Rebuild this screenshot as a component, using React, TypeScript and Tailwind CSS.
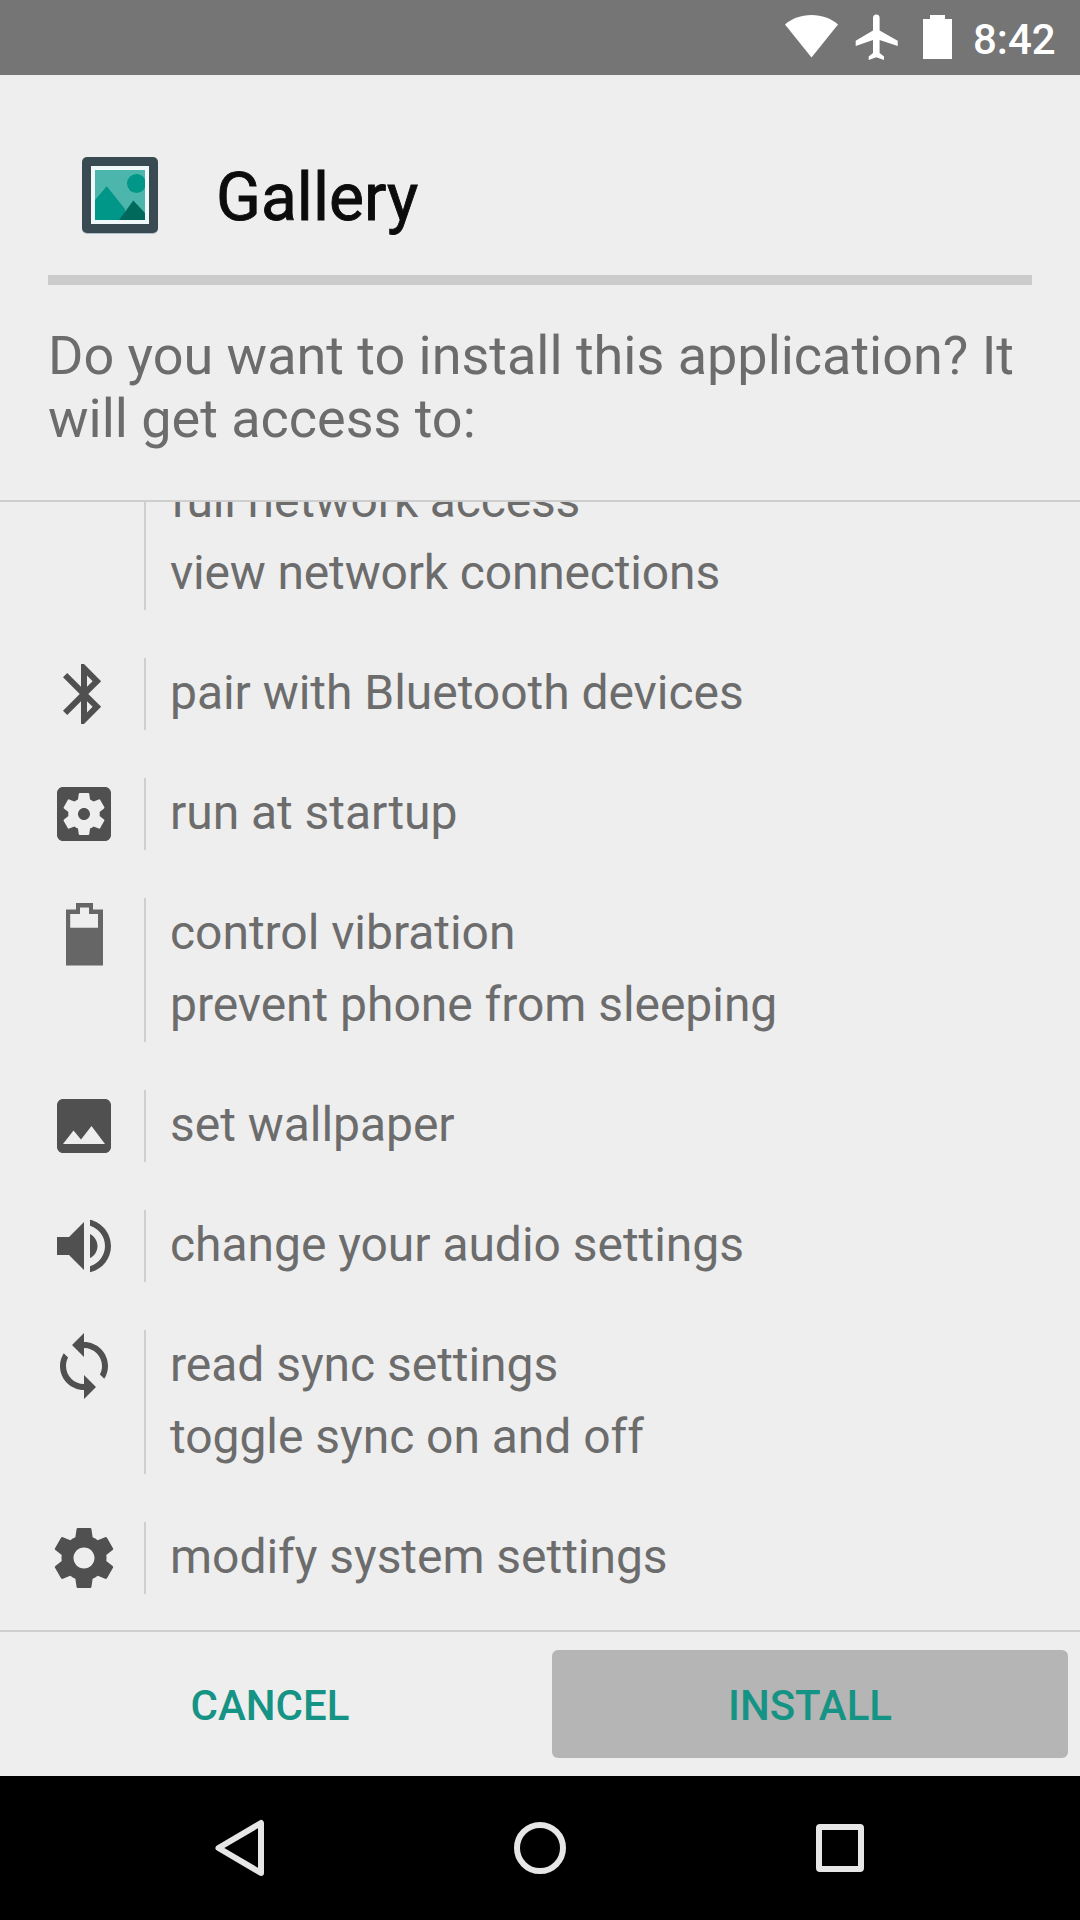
import React from 'react';
import clsx from 'clsx';

const paths = {
  bluetooth:
    'M17.71 7.71L12 2h-1v7.59L6.41 5 5 6.41 10.59 12 5 17.59 6.41 19 11 14.41V22h1l5.71-5.71-4.3-4.29 4.3-4.29zM13 5.83l1.88 1.88L13 9.59V5.83zm1.88 10.46L13 18.17v-3.76l1.88 1.88z',
  startup:
    'M12 10c-1.1 0-2 .9-2 2s.9 2 2 2 2-.9 2-2-.9-2-2-2zm7-7H5c-1.11 0-2 .9-2 2v14c0 1.1.89 2 2 2h14c1.11 0 2-.9 2-2V5c0-1.1-.89-2-2-2zm-1.75 9c0 .23-.02.46-.05.68l1.48 1.16c.13.11.17.3.08.45l-1.4 2.42c-.09.15-.27.21-.43.15l-1.74-.7c-.36.28-.76.51-1.18.69l-.26 1.85c-.03.17-.18.3-.35.3h-2.8c-.17 0-.32-.13-.35-.29l-.26-1.85c-.43-.18-.82-.41-1.18-.69l-1.74.7c-.16.06-.34 0-.43-.15l-1.4-2.42c-.09-.15-.05-.34.08-.45l1.48-1.16c-.03-.23-.05-.46-.05-.69 0-.23.02-.46.05-.68l-1.48-1.16c-.13-.11-.17-.3-.08-.45l1.4-2.42c.09-.15.27-.21.43-.15l1.74.7c.36-.28.76-.51 1.18-.69l.26-1.85c.03-.17.18-.3.35-.3h2.8c.17 0 .32.13.35.29l.26 1.85c.43.18.82.41 1.18.69l1.74-.7c.16-.06.34 0 .43.15l1.4 2.42c.09.15.05.34-.08.45l-1.48 1.16c.03.23.05.46.05.69z',
  battery: 'M9.33 1.67H15V3.8h3.33v18.7H6V3.8h3.33zM10.67 3.2v2.13H7.4V9.9h9.27V5.33h-3V3.2z',
  wallpaper:
    'M21 19V5c0-1.1-.9-2-2-2H5c-1.1 0-2 .9-2 2v14c0 1.1.9 2 2 2h14c1.1 0 2-.9 2-2zM8.5 13.5l2.5 3.01L14.5 12l4.5 6H5l3.5-4.5z',
  volume:
    'M3 9v6h4l5 5V4L7 9H3zm13.5 3c0-1.77-1.02-3.29-2.5-4.03v8.05c1.48-.73 2.5-2.25 2.5-4.02zM14 3.23v2.06c2.89.86 5 3.54 5 6.71s-2.11 5.85-5 6.71v2.06c4.01-.91 7-4.49 7-8.77s-2.99-7.86-7-8.77z',
  sync:
    'M12 4V1L8 5l4 4V6c3.31 0 6 2.69 6 6 0 1.01-.25 1.97-.7 2.8l1.46 1.46C19.54 15.03 20 13.57 20 12c0-4.42-3.58-8-8-8zm0 14c-3.31 0-6-2.69-6-6 0-1.01.25-1.97.7-2.8L5.24 7.74C4.46 8.97 4 10.43 4 12c0 4.42 3.58 8 8 8v3l4-4-4-4v3z',
  settings:
    'M19.43 12.98c.04-.32.07-.64.07-.98s-.03-.66-.07-.98l2.11-1.65c.19-.15.24-.42.12-.64l-2-3.46c-.12-.22-.39-.3-.61-.22l-2.49 1c-.52-.4-1.08-.73-1.69-.98l-.38-2.65C14.46 2.18 14.25 2 14 2h-4c-.25 0-.46.18-.49.42l-.38 2.65c-.61.25-1.17.59-1.69.98l-2.49-1c-.23-.09-.49 0-.61.22l-2 3.46c-.13.22-.07.49.12.64l2.11 1.65c-.04.32-.07.65-.07.98s.03.66.07.98l-2.11 1.65c-.19.15-.24.42-.12.64l2 3.46c.12.22.39.3.61.22l2.49-1c.52.4 1.08.73 1.69.98l.38 2.65c.03.24.24.42.49.42h4c.25 0 .46-.18.49-.42l.38-2.65c.61-.25 1.17-.59 1.69-.98l2.49 1c.23.09.49 0 .61-.22l2-3.46c.12-.22.07-.49-.12-.64l-2.11-1.65zM12 15.5c-1.93 0-3.5-1.57-3.5-3.5s1.57-3.5 3.5-3.5 3.5 1.57 3.5 3.5-1.57 3.5-3.5 3.5z',
};

type Permission = {
  icon?: keyof typeof paths;
  labels: string[];
  tight?: boolean;
};

const permissions: Permission[] = [
  { labels: ['full network access', 'view network connections'], tight: true },
  { icon: 'bluetooth', labels: ['pair with Bluetooth devices'] },
  { icon: 'startup', labels: ['run at startup'] },
  { icon: 'battery', labels: ['control vibration', 'prevent phone from sleeping'] },
  { icon: 'wallpaper', labels: ['set wallpaper'] },
  { icon: 'volume', labels: ['change your audio settings'] },
  { icon: 'sync', labels: ['read sync settings', 'toggle sync on and off'] },
  { icon: 'settings', labels: ['modify system settings'] },
];

const StatusBar = () => (
  <div className="flex h-[75px] shrink-0 bg-[#757575] text-white">
    <svg className="ml-[785px] mt-[15px] h-[43px] w-[53px] shrink-0" viewBox="0 0 53 43" fill="currentColor">
      <path d="M26.5 42.5L0 9.5C7 3.5 16 0 26.5 0S46 3.5 53 9.500z" />
    </svg>
    <svg className="ml-[17px] mt-[14px] h-[46px] w-[43px] shrink-0" viewBox="0 0 43 46" fill="currentColor">
      <path d="M18 4q0-3.500 3.300-3.500T24.600 4v12.500l18.100 10.200V32l-18.100-6v13l4.400 3.500V46l-7.700-2.700-7.600 2.700v-3.500L18 39V26L.7 32v-5.300L18 16.500z" />
    </svg>
    <svg className="ml-[25px] mt-[15px] h-11 w-[29px] shrink-0" viewBox="0 0 29 44" fill="currentColor">
      <path d="M7 0h15v4h7v40H0V4h7z" />
    </svg>
    <span className="ml-[21px] mt-[15px] text-[42px] font-medium leading-[49px]">8:42</span>
  </div>
);

const GalleryIcon = () => (
  <svg className="h-20 w-20" viewBox="0 0 80 80">
    <rect x="2" y="3" width="76" height="76" rx="5" fill="#b0bec5" />
    <rect x="2" y="2" width="76" height="76" rx="5" fill="#3a4a52" />
    <rect x="13" y="13" width="54" height="54" fill="#4db6ac" />
    <circle cx="56.5" cy="28.5" r="9.5" fill="#009688" />
    <path d="M15 45l11.700-13.700L45 54v11H15z" fill="#009688" />
    <path d="M39 65l14.300-19.500L65 58v7z" fill="#00695c" />
    <rect x="13" y="13" width="54" height="54" fill="none" stroke="#f1f8fa" strokeWidth="4" />
  </svg>
);

const PermissionGroup = ({ icon, labels, tight }: Permission) => (
  <div className="flex">
    <div className="h-[72px] w-[72px] shrink-0">
      {icon && (
        <svg className="h-[72px] w-[72px]" viewBox="0 0 24 24" fill={icon === 'battery' ? '#666666' : '#505050'}>
          <path fillRule="evenodd" d={paths[icon]} />
        </svg>
      )}
    </div>
    <div
      className={clsx(
        'ml-6 border-l-2 border-[#cecece] pl-6 text-[48px] leading-[70px]',
        tight ? 'tracking-[-0.17px]' : 'tracking-[-0.04px]'
      )}
    >
      {labels.map((label) => (
        <p key={label} className="h-[72px]">
          {label}
        </p>
      ))}
    </div>
  </div>
);

const NavigationBar = () => (
  <nav className="flex h-36 shrink-0 items-center justify-center gap-[228px] bg-black">
    <svg className="h-[72px] w-[72px]" viewBox="0 0 72 72" fill="none" stroke="#e6e6e6" strokeWidth="6" strokeLinejoin="round">
      <path d="M57 11v50L14.500 36z" />
    </svg>
    <svg className="h-[72px] w-[72px]" viewBox="0 0 72 72" fill="none" stroke="#e6e6e6" strokeWidth="6">
      <circle cx="36" cy="36" r="23" />
    </svg>
    <svg className="h-[72px] w-[72px]" viewBox="0 0 72 72" fill="none" stroke="#e6e6e6" strokeWidth="6">
      <rect x="15" y="15" width="42" height="42" rx="1" />
    </svg>
  </nav>
);

const App = () => {
  return (
    <div className="flex h-[1920px] w-[1080px] flex-col overflow-hidden bg-[#eeeeee] font-['Roboto',sans-serif] text-[#6c6c6c]">
      <StatusBar />
      <header className="h-[425px] shrink-0 px-12 pt-20">
        <div className="flex h-[120px] items-start pl-8">
          <GalleryIcon />
          <h1 className="ml-14 mt-[3px] text-[66px] leading-[80px] text-[#0c0c0c] [-webkit-text-stroke:0.9px_#0c0c0c]">
            Gallery
          </h1>
        </div>
        <div className="h-2.5 bg-[#cbcbcb]" />
        <p className="mt-[39px] text-[54px] leading-[63px] tracking-[-0.02px]">
          Do you want to install this application? It
          <br />
          will get access to:
        </p>
      </header>
      <main className="flex h-[1132px] shrink-0 flex-col justify-end gap-12 overflow-hidden border-y-2 border-[#cecece] px-12 pb-9">
        {permissions.map((permission) => (
          <PermissionGroup key={permission.labels[0]} {...permission} />
        ))}
      </main>
      <div className="flex h-36 shrink-0 items-center gap-3 pr-3 text-[42px] font-medium text-[#159384]">
        <button className="h-[108px] w-[540px] pt-0.5">CANCEL</button>
        <button className="h-[108px] w-[516px] rounded-md bg-[#b5b5b5] pt-0.5">INSTALL</button>
      </div>
      <NavigationBar />
    </div>
  );
};

export default App;
